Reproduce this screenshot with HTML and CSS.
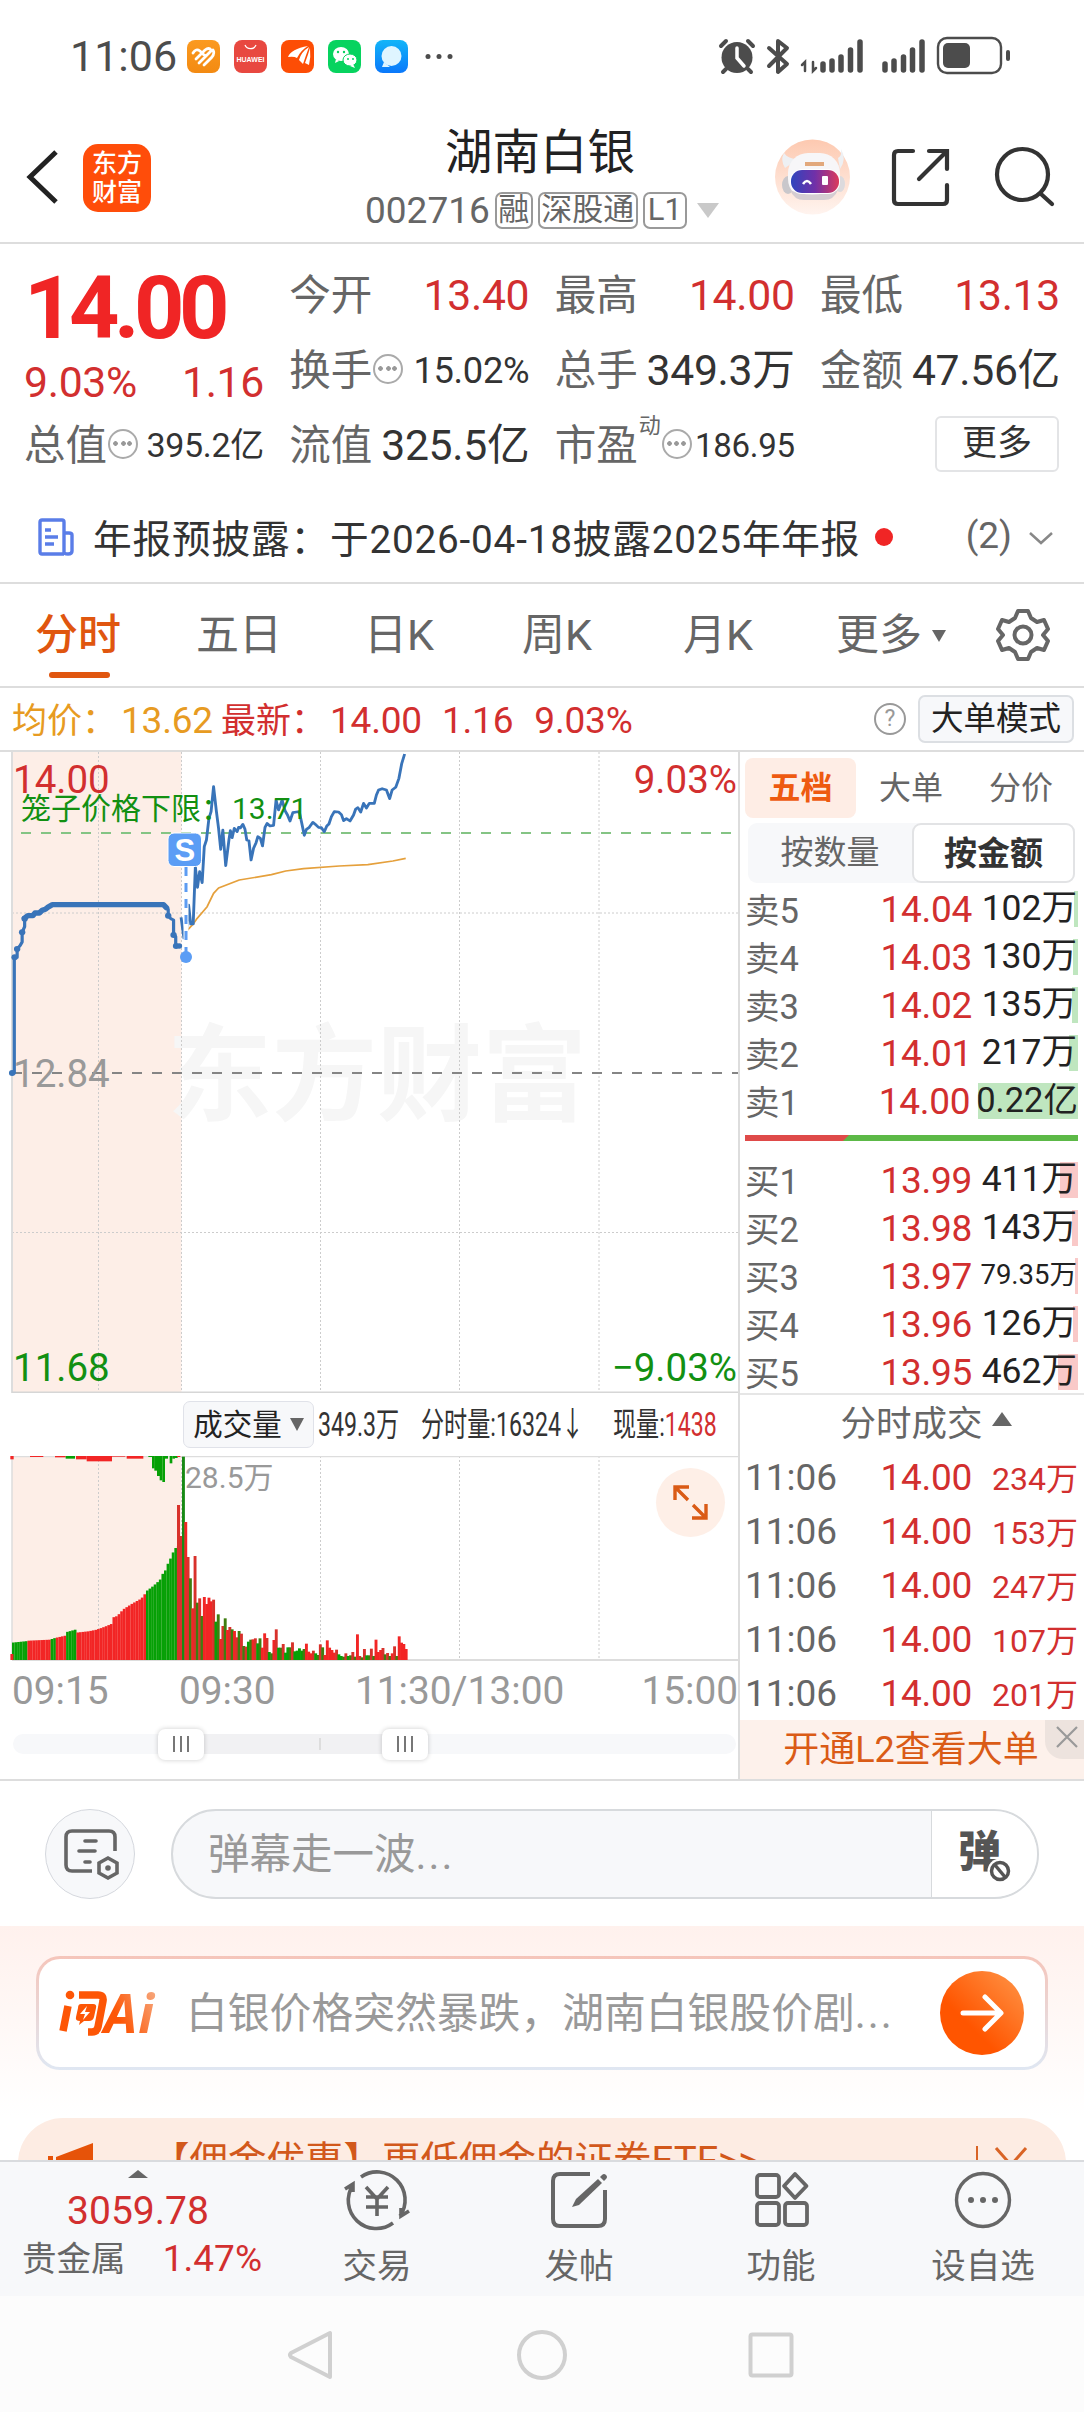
FILE: index.html
```html
<!DOCTYPE html>
<html lang="zh-CN">
<head>
<meta charset="utf-8">
<title>湖南白银 002716</title>
<link rel="stylesheet" href="styles.css">
</head>
<body>
<div class="phone">
  <div class="status">
    <span class="clock">11:06</span>
    <svg class="app-icons" width="270" height="34" viewBox="0 0 270 34">
      <defs>
        <linearGradient id="blueApp" x2="0" y2="1"><stop stop-color="#12b5f8"/><stop offset="1" stop-color="#0a78fb"/></linearGradient>
        <linearGradient id="orangeApp" x2="0" y2="1"><stop stop-color="#fb9a20"/><stop offset="1" stop-color="#f38a12"/></linearGradient>
      </defs>
      <rect width="33" height="33" rx="8" fill="url(#orangeApp)"/>
      <path d="M6 13q3-5 7-2l5 5M9 19l9-9q4-3 6 0M12 23l12-12M17 25l8-8q3-4 1-7" stroke="#fff" stroke-width="2.800" fill="none" stroke-linecap="round"/>
      <rect x="47" width="33" height="33" rx="8" fill="#e84840"/>
      <path d="M58 5a6 6 0 0 0 11 0" stroke="#fff" stroke-width="1.300" fill="none"/>
      <text x="63.500" y="22" class="hw">HUAWEI</text>
      <rect x="94" width="33" height="33" rx="8" fill="#fd4d05"/>
      <path d="M101 17q3-8 20-11q-7 4-11 12q-3-2-9-1zM112 20q2-8 10-13q-3 8-6 17zM118 23q3-8 5-15q1 9-1 17z" fill="#fff"/>
      <rect x="141" width="33" height="33" rx="8" fill="#07d35f"/>
      <ellipse cx="154" cy="14" rx="8" ry="7" fill="#fff"/><ellipse cx="163" cy="20" rx="7" ry="6" fill="#fff" stroke="#07d35f"/>
      <path d="M149 19l-1 4 4-2zM166 24l2 4-5-2z" fill="#fff"/>
      <g fill="#07d35f"><circle cx="151" cy="12" r="1.200"/><circle cx="157" cy="12" r="1.200"/><circle cx="161" cy="19" r="1"/><circle cx="166" cy="19" r="1"/></g>
      <rect x="188" width="33" height="33" rx="8" fill="url(#blueApp)"/>
      <circle cx="204.500" cy="16" r="10" fill="#dff5ff"/><path d="M197 22l-2 5h8z" fill="#dff5ff"/>
      <g fill="#4c4c4c"><circle cx="241" cy="16.500" r="2.500"/><circle cx="252" cy="16.500" r="2.500"/><circle cx="263" cy="16.500" r="2.500"/></g>
    </svg>
    <svg class="sys-icons" width="300" height="40" viewBox="716 35 300 40" fill="none" stroke="#4c4c4c" stroke-linecap="round">
      <circle cx="737" cy="57.500" r="15.500" fill="#4c4c4c" stroke="none"/>
      <path d="M721 46l5-5M748 41l5 5M726 69l-3 3M748 69l3 3" stroke-width="4"/>
      <path d="M737 48v10l7 8" stroke="#fff" stroke-width="3.500"/>
      <path d="M769 48l18 16-9 8V41l9 7-18 18" stroke-width="4" stroke-linejoin="round"/>
      <path d="M802 65l3-3v9M813 62v9l3-3" stroke-width="2.500"/>
      <path d="M823 64v6M832 61v9M841 57v13M850.500 50v20M860 42v28M885 64v6M894 61v9M903.500 57v13M912.500 50v20M922 42v28" stroke-width="5.500"/>
      <rect x="938" y="38" width="63" height="35" rx="9" stroke-width="2.400"/>
      <rect x="943" y="43" width="27" height="25" rx="5" fill="#4c4c4c" stroke="none"/>
      <path d="M1008 52v7" stroke-width="4"/>
    </svg>
  </div>

  <header class="header">
    <svg class="back" width="36" height="56" viewBox="0 0 36 56"><path d="M32 3L6 28l26 25" fill="none" stroke="#222" stroke-width="5"/></svg>
    <div class="brand"><span>东方</span><span>财富</span></div>
    <div class="title">
      <h1>湖南白银</h1>
      <div class="code"><span>002716</span><i>融</i><i>深股通</i><i>L1</i><b class="down"></b></div>
    </div>
    <svg class="head-icons" width="290" height="80" viewBox="770 137 290 80" fill="none">
      <defs>
        <linearGradient id="halo" x2="0" y2="1"><stop stop-color="#fdc9b0"/><stop offset="1" stop-color="#fff4ef"/></linearGradient>
        <linearGradient id="visor"><stop stop-color="#2f45bd"/><stop offset=".5" stop-color="#7130a8"/><stop offset="1" stop-color="#dc3a5c"/></linearGradient>
      </defs>
      <circle cx="812.500" cy="177" r="37.500" fill="url(#halo)"/>
      <path d="M785 168q-5-8-1-15q4 6 14 6zM838 158q4-2 3-9q6 10-1 20z" fill="#eef0f3"/>
      <ellipse cx="788" cy="185" rx="6" ry="9" fill="#c9c7cb"/><ellipse cx="840" cy="184" rx="5" ry="8" fill="#dcdadd"/>
      <rect x="788" y="153" width="52" height="46" rx="20" fill="#f7f6f8"/>
      <path d="M790 190q20 9 48 0q-4 10-14 10h-20q-10 0-14-10z" fill="#d5cdd2"/>
      <rect x="790" y="169" width="50" height="25" rx="12" fill="#fff"/>
      <rect x="791" y="170" width="48" height="23" rx="11" fill="url(#visor)"/>
      <path d="M803 184q4-6 8 0" stroke="#fff" stroke-width="2.500"/><rect x="822" y="176" width="6" height="9" rx="1" fill="#fff"/>
      <path d="M805 164h19" stroke="#e2a87c" stroke-width="4"/>
      <path d="M913 151h-15q-4 0-4 4v45q0 4 4 4h45q4 0 4-4v-15M929 151h18v18M946 152l-27 27" stroke="#333" stroke-width="4.200" stroke-linecap="round"/>
      <circle cx="1022.500" cy="174.500" r="25.500" stroke="#333" stroke-width="4.200"/><path d="M1041 194l11 10" stroke="#333" stroke-width="4.200" stroke-linecap="round"/>
    </svg>
  </header>

  <section class="quote">
    <div class="grid">
      <div class="price">14.00</div>
      <div class="cell"><span class="lb">今开</span><span class="v red">13.40</span></div>
      <div class="cell"><span class="lb">最高</span><span class="v red">14.00</span></div>
      <div class="cell"><span class="lb">最低</span><span class="v red">13.13</span></div>
      <div class="cell change"><span class="v red">9.03%</span><span class="v red">1.16</span></div>
      <div class="cell"><span class="lb">换手</span><em class="tip"></em><span class="v m">15.02%</span></div>
      <div class="cell"><span class="lb">总手</span><span class="v">349.3万</span></div>
      <div class="cell"><span class="lb">金额</span><span class="v">47.56亿</span></div>
      <div class="cell"><span class="lb">总值</span><em class="tip"></em><span class="v s">395.2亿</span></div>
      <div class="cell"><span class="lb">流值</span><span class="v">325.5亿</span></div>
      <div class="cell"><span class="lb">市盈</span><sup>动</sup><em class="tip"></em><span class="v xs">186.95</span></div>
      <div class="cell end"><button class="more">更多</button></div>
    </div>
    <div class="news">
      <svg width="38" height="40" viewBox="0 0 38 40" fill="none" stroke="#5a7de8" stroke-width="3.400" stroke-linejoin="round"><path d="M27 37H5q-2 0-2-2V5q0-2 2-2h20q2 0 2 2v30q0 2 4 2t4-3V18q0-2-3-2h-5M8 13h6M8 20h13M8 27h9"/></svg>
      <span class="headline">年报预披露：于2026-04-18披露2025年年报</span>
      <b class="dot"></b>
      <span class="count">(2)</span>
      <svg class="chev" width="26" height="14" viewBox="0 0 26 14"><path d="M2 2l11 10L24 2" fill="none" stroke="#888" stroke-width="2.500"/></svg>
    </div>
  </section>

  <nav class="periods">
    <span class="on">分时</span><span>五日</span><span>日K</span><span>周K</span><span>月K</span><span class="dd">更多<b class="down"></b></span>
    <svg width="54" height="56" viewBox="-27 -28 54 56" fill="none" stroke="#666" stroke-width="4" stroke-linejoin="round"><path d="M-5-24H5L8-17L14-13L21-15L25-6L20 0L25 6L21 15L14 13L8 17L5 24H-5L-8 17L-14 13L-21 15L-25 6L-20 0L-25-6L-21-15L-14-13L-8-17Z"/><circle r="8.500"/></svg>
  </nav>

  <div class="summary">
    <span class="avg">均价：<b>13.62</b></span><span class="last">最新：<b>14.00</b><b class="d">1.16</b><b class="p">9.03%</b></span>
    <span class="help">?</span><button>大单模式</button>
  </div>

  <main class="market">
    <section class="charts">
      <svg class="price-chart" width="738" height="641" viewBox="0 752 738 641">
        <rect x="12" y="752" width="169.500" height="641" fill="#fdeee7"/>
        <text x="167" y="1112" class="watermark">东方财富</text>
        <path d="M98.500 752v641M181.500 752v641M320.500 752v641M459.500 752v641M599 752v641M12 913h726M12 1232.500h726" class="gridline"/>
        <path d="M12 752v641" stroke="#ddd" stroke-width="2"/>
        <path d="M12 1392.500h726" stroke="#d6d6d6" stroke-width="2"/>
        <path d="M21 833H738" stroke="#84c484" stroke-width="2" stroke-dasharray="10 10"/>
        <path d="M12 1073H738" stroke="#858585" stroke-width="2" stroke-dasharray="10 10"/>
        <g transform="translate(0 740) scale(.35714 .33333)" fill="none" stroke-linejoin="round">
          <path d="M521 575L541 552 550 538 580 500 598 460 612 444 670 420 760 404 800 393 850 386 950 378 1030 374 1100 363 1136 355" stroke="#e5a03c" stroke-width="5"/>
          <path d="M34 999H40V652H48V627L56 617 62 606V577L69 560V536L78 527H92L98 519H110L118 511 127 508 134 502 142 499 146 494M458 494L464 502 471 508V527L478 536 486 540V585L492 590V618H503" stroke="#3974b9" stroke-width="9"/>
          <path d="M69 534L78 527H92L98 519H110L118 511 127 508 134 502 146 494H458L466 503" stroke="#3974b9" stroke-width="16" stroke-linecap="round"/>
          <path d="M507 532L515 594 521 590 528 495 534 552 541 552 547 380 553 442 559 395 566 428 572 320 578 300 585 235 591 215 598 140 606 215 612 265 618 328 624 270 632 377 641 300 645 272 650 293 656 265 664 275 668 262 673 264 680 253 686 268 691 300 697 302 703 360 710 325 717 308 722 290 729 295 735 318 742 262 748 250 756 258 766 256 773 180 780 210 790 180 798 212 805 225 812 243 820 218 830 216 838 215 845 250 852 286 858 268 866 262 876 247 886 256 892 262 900 263 908 275 915 258 921 252 928 230 936 215 948 216 956 224 962 242 970 236 980 243 990 225 996 207 1002 203 1010 216 1018 190 1026 204 1034 190 1048 190 1054 165 1060 150 1070 146 1082 150 1091 176 1098 150 1108 142 1117 115 1125 70 1133 42" stroke="#3974b9" stroke-width="8"/>
          <g fill="#3974b9"><circle cx="34" cy="999" r="9"/><circle cx="41" cy="652" r="9"/><circle cx="48" cy="627" r="9"/><circle cx="62" cy="577" r="9"/><circle cx="69" cy="536" r="9"/><circle cx="471" cy="527" r="9"/><circle cx="486" cy="585" r="9"/><circle cx="493" cy="618" r="9"/><circle cx="502" cy="618" r="8"/></g>
        </g>
        <path d="M186 866V950" stroke="#fff" stroke-width="5"/><path d="M186 867V955" stroke="#5d9cf2" stroke-width="3" stroke-dasharray="9 7"/>
        <circle cx="186" cy="957" r="6" fill="#5b9df5"/>
        <rect x="168" y="833" width="33.500" height="33.500" rx="6" fill="#5b9df5" stroke="#fff"/>
        <text x="184.800" y="861" class="sell">S</text>
        <text x="13" y="793" class="axis" fill="#d22f2f">14.00</text>
        <text x="737" y="793" class="axis r" fill="#d22f2f">9.03%</text>
        <text x="21" y="819" class="cage">笼子价格下限：<tspan x="232">13.71</tspan></text>
        <text x="13" y="1087" class="axis" fill="#999">12.84</text>
        <text x="13" y="1381" class="axis" fill="#129012">11.68</text>
        <text x="737" y="1381" class="axis r" fill="#129012">−9.03%</text>
      </svg>
      <div class="indicator">
        <button>成交量<b class="down"></b></button>
        <span class="nar total"><span>349.3万</span></span>
        <span class="nar minute"><span>分时量:16324↓</span></span>
        <span class="nar now"><span>现量:<i>1438</i></span></span>
      </div>
      <svg class="volume" width="738" height="265" viewBox="0 1456 738 265">
        <rect x="12" y="1456" width="169.500" height="203" fill="#fdeee7"/>
        <path d="M98.500 1456v203M181.500 1456v203M320.500 1456v203M459.500 1456v203M599 1456v203" class="gridline"/>
        <path d="M12 1456.500H738M12 1456v203" stroke="#ddd" stroke-width="1.500"/><path d="M12 1660H738" stroke="#ddd" stroke-width="2"/>
        <g id="bars"></g>
        <text x="185" y="1488" class="peak">28.5万</text>
        <circle cx="690.500" cy="1502.500" r="34.500" fill="#feefe7"/>
        <path d="M675 1500v-13h14M676 1488l12 12M706 1504v14h-14M705 1517l-12-12" stroke="#da5b16" stroke-width="3.400" fill="none"/>
        <g class="times"><text x="12" y="1704">09:15</text><text x="179" y="1704">09:30</text><text x="355" y="1704">11:30/13:00</text><text x="738" y="1704" class="r">15:00</text></g>
      </svg>
      <div class="range"><div class="span"><i></i><b></b><i></i></div></div>
    </section>

    <aside class="book">
      <div class="modes"><b>五档</b><span>大单</span><span>分价</span></div>
      <div class="seg"><span>按数量</span><b>按金额</b></div>
      <ul class="levels sell-side">
        <li><span>卖5</span><b>14.04</b><em style="--w:4px">102万</em></li>
        <li><span>卖4</span><b>14.03</b><em style="--w:5px">130万</em></li>
        <li><span>卖3</span><b>14.02</b><em style="--w:6px">135万</em></li>
        <li><span>卖2</span><b>14.01</b><em style="--w:9px">217万</em></li>
        <li><span>卖1</span><b>14.00</b><em class="md" style="--w:100px">0.22亿</em></li>
      </ul>
      <div class="ratio"><i></i></div>
      <ul class="levels buy-side">
        <li><span>买1</span><b>13.99</b><em style="--w:18px">411万</em></li>
        <li><span>买2</span><b>13.98</b><em style="--w:6px">143万</em></li>
        <li><span>买3</span><b>13.97</b><em class="sm" style="--w:3px">79.35万</em></li>
        <li><span>买4</span><b>13.96</b><em style="--w:5px">126万</em></li>
        <li><span>买5</span><b>13.95</b><em style="--w:20px">462万</em></li>
      </ul>
      <div class="deals-title">分时成交<b class="up"></b></div>
      <ul class="deals">
        <li><span>11:06</span><b>14.00</b><em>234万</em></li>
        <li><span>11:06</span><b>14.00</b><em>153万</em></li>
        <li><span>11:06</span><b>14.00</b><em>247万</em></li>
        <li><span>11:06</span><b>14.00</b><em>107万</em></li>
        <li><span>11:06</span><b>14.00</b><em>201万</em></li>
      </ul>
      <div class="l2">开通L2查看大单<span class="close"><svg width="22" height="22" viewBox="0 0 22 22"><path d="M1 1l20 20M21 1L1 21" stroke="#999" stroke-width="2.200"/></svg></span></div>
    </aside>
  </main>

  <div class="danmu">
    <div class="round"><svg width="56" height="52" viewBox="0 0 56 52" fill="none" stroke="#666" stroke-width="3.600" stroke-linecap="round"><path d="M28 42H8q-6 0-6-6V8q0-6 6-6h37q6 0 6 6v14" stroke-linecap="butt"/><path d="M21 12h11M15 22h16M21 33h5"/><path d="M44 29l9 5v10l-9 5-9-5V34z"/><circle cx="44" cy="39" r="2.800" fill="#666" stroke="none"/></svg></div>
    <div class="field"><span>弹幕走一波<i class="dots">...</i></span><div class="toggle">弹<svg width="26" height="26" viewBox="-13 -13 26 26"><circle r="12.500" fill="#fff"/><circle r="8.500" fill="none" stroke="#555" stroke-width="3.500"/><path d="M-5-6L5 6" stroke="#555" stroke-width="3.500"/></svg></div></div>
  </div>

  <div class="feed">
    <div class="ask">
      <svg width="104" height="54" viewBox="0 0 104 54">
        <defs><linearGradient id="askInk" gradientUnits="userSpaceOnUse" x1="0" y1="50" x2="100" y2="0"><stop offset=".55" stop-color="#fd5606"/><stop offset="1" stop-color="#f6b089"/></linearGradient></defs>
        <g fill="none" stroke="url(#askInk)" stroke-width="7.500" stroke-linecap="round" stroke-linejoin="round"><path d="M10 20L5 45M21 9h19q6 0 5 6l-5 26q-1 5-6 5h-4" stroke-linecap="butt"/></g>
        <circle cx="12" cy="9" r="4.300" fill="url(#askInk)"/>
        <path d="M21 18h14q4 0 3 4l-2 9q-1 4-5 4h-5l-5 4 1-4q-5 0-4-4l2-9q0-4 3-4z" fill="#fd5606"/>
        <path d="M29 20l-7 8h5l-2 6 7-8h-5z" fill="#fff"/>
        <text x="46" y="47" class="ai" fill="url(#askInk)">Ai</text>
      </svg>
      <span class="q">白银价格突然暴跌，湖南白银股价剧<i class="dots">...</i></span>
      <span class="go"><svg width="44" height="40" viewBox="0 0 44 40" fill="none" stroke="#fff" stroke-width="5" stroke-linecap="round" stroke-linejoin="round"><path d="M3 20h37M25 4l16 16-16 16"/></svg></span>
    </div>
    <div class="promo">
      <svg class="horn" width="46" height="40" viewBox="0 0 46 40" fill="#e65309"><path d="M0 13h5v20H0zM8 14L45 0v38L8 28z"/></svg>
      <span class="ptext">【佣金优惠】更低佣金的证券ETF&gt;&gt;</span>
      <svg class="px" width="52" height="34" viewBox="0 0 52 34" fill="none" stroke="#d96426" stroke-width="2"><path d="M1 0v34"/><path d="M20 2l30 34M50 2L20 36" stroke-width="3"/></svg>
    </div>
  </div>

  <nav class="tabbar">
    <div class="index"><b class="up"></b><span class="num">3059.78</span><div><span>贵金属</span><span class="pc">1.47%</span></div></div>
    <div class="tab"><svg width="68" height="62" viewBox="-34 -31 68 62" fill="none" stroke="#666" stroke-width="3.600"><path d="M-16-23A28 28 0 0 1 23 16M16 23A28 28 0 0 1-24-15M-32-11l8-5v8M32 11l-8 5V8M-11-13L0-1 11-13M0-1v17M-11-3h22M-11 7h22"/></svg>交易</div>
    <div class="tab"><svg width="68" height="62" viewBox="-34 -31 68 62" fill="none" stroke="#666" stroke-width="4"><path d="M11-26h-30q-7 0-7 7v38q0 7 7 7h38q7 0 7-7V-10"/><path d="M-7 7l4-8L19-21l4 4L0 5z" fill="#666" stroke="none"/><path d="M21-23l2-2q2-2 4 0t0 4l-2 2z" fill="#666" stroke="none"/></svg>发帖</div>
    <div class="tab"><svg width="68" height="62" viewBox="-34 -31 68 62" fill="none" stroke="#666" stroke-width="3.800" stroke-linejoin="round"><rect x="-24" y="-25" width="22" height="22" rx="3"/><rect x="-24" y="3" width="22" height="22" rx="3"/><rect x="4" y="3" width="22" height="22" rx="3"/><path d="M14-26l11.500 12L14-2 3-14z"/></svg>功能</div>
    <div class="tab"><svg width="68" height="62" viewBox="-34 -31 68 62" fill="#666"><circle r="26.500" fill="none" stroke="#666" stroke-width="3.400"/><circle cx="-12" r="3"/><circle r="3"/><circle cx="12" r="3"/></svg>设自选</div>
  </nav>
  <div class="sysnav"><svg width="520" height="60" viewBox="282 2324 520 60" fill="none" stroke="#d0d0d0" stroke-width="4" stroke-linejoin="round"><path d="M330 2332v44L291 2356q-2-2 0-4z"/><circle cx="542" cy="2354" r="23"/><rect x="750.500" y="2333.500" width="41" height="41" rx="2"/></svg></div>
</div>
<script src="volume.js"></script>
</body>
</html>
```
FILE: volume.js
```js
// Volume bars. Heights are in thirds of a pixel, measured from the baseline.
const NS = 'http://www.w3.org/2000/svg';
const root = document.getElementById('bars');
const RED = '#f22525', GREEN = '#06a006';
const MIX_RED = '#d8312b', MIX_GREEN = '#3f7d10';

function bar(x, y, w, h, fill) {
  const r = document.createElementNS(NS, 'rect');
  r.setAttribute('x', x); r.setAttribute('y', y);
  r.setAttribute('width', w); r.setAttribute('height', h);
  r.setAttribute('fill', fill);
  root.appendChild(r);
}

// Call auction, 09:15 to 09:25: [x, height] envelope
const env = [[36,52],[84,57],[86,58],[150,61],[165,66],[196,73],[197,83],[226,91],[228,82],[265,86],[290,91],[315,100],[334,108],[337,127],[352,132],[370,152],[395,168],[420,182],[430,190],[440,207],[460,222],[480,240],[488,258],[497,270],[505,292],[513,307],[521,327],[531,342]];
const greens = [[36,84],[150,165],[197,228],[440,531]];
for (let x = 36; x < 531; x += 7.73) {
  let i = 1;
  while (i < env.length - 1 && env[i][0] < x + 4) i++;
  const [x0, h0] = env[i - 1], [x1, h1] = env[i];
  const h = h0 + (h1 - h0) * Math.min(1, (x + 4 - x0) / (x1 - x0));
  const g = greens.some(([a, b]) => x + 4 >= a && x + 4 < b);
  bar(x / 3, 1660 - h / 3, 2.65, h / 3, g ? GREEN : RED);
}
bar(10.4, 1654, 3, 6, RED);
bar(177, 1505, 3, 155, MIX_RED);
bar(180, 1536, 2.2, 124, MIX_RED);

// Unmatched auction volume, hanging from the top edge
[[31,10,10,1],[90,40,3,1],[165,32,4,1],[197,28,8,0],[228,32,10,1],[260,76,16,1],[336,40,2,1],[380,50,8,1],[445,11,3,0],[456,8,37,0],[463,9,44,0],[471,9,60,0],[479,8,73,0],[487,8,78,0],[495,9,8,0],[509,8,22,0],[517,8,8,0],[525,8,6,0],[531,10,3,1]]
  .forEach(([x, w, h, r]) => bar(x / 3, 1456, w / 3, h / 3, r ? RED : GREEN));

// One bar a minute from 09:30; negative values are falling minutes
const minutes = [-610,414,309,-245,155,312,-172,185,-132,189,168,187,176,181,-115,-137,63,102,-125,90,99,-92,87,68,-87,79,-42,40,-55,-61,62,65,-50,-65,37,80,66,-24,-20,60,92,-37,-37,48,-22,-38,-38,53,-26,-28,-35,-28,-33,49,25,20,28,-20,-15,47,-38,15,59,37,30,22,31,-17,-12,-10,20,-12,-14,24,-10,77,12,-8,33,-14,-14,34,-12,61,24,30,36,-17,21,-12,20,41,-12,71,52,48,33];
minutes.forEach((v, i) => {
  const h = Math.abs(v) / 3;
  const near = Math.sign(minutes[i + 1] || v) === Math.sign(v);
  const fill = v < 0 ? (near ? GREEN : MIX_GREEN) : (near ? RED : MIX_RED);
  bar(182 + i * 2.32, 1660 - h, 2.9, h, i ? fill : '#188a14');
});
```
FILE: styles.css
```css
* { box-sizing: border-box; }
body { margin: 0; background: #fff; color: #333; font-family: Roboto, "Noto Sans CJK SC", sans-serif; }
button { font: inherit; color: inherit; padding: 0; }
ul { list-style: none; margin: 0; padding: 0; }
i, em { font-style: normal; }
h1 { margin: 0; font-weight: 400; color: #222; }
svg { flex: none; display: block; }
.phone { width: 1084px; height: 2412px; overflow: hidden; display: flex; flex-direction: column; background: #fff; }
.phone > * { flex: none; }
.down, .up { display: inline-block; border: solid transparent; border-width: 0 8px; }
.down { border-top: 13px solid #666; }
.up { border-bottom: 14px solid #666; }
.red { color: #d22f2f; }
.dots { letter-spacing: 2px; }

.status { height: 112px; display: flex; align-items: center; padding-left: 70px; color: #4c4c4c; }
.clock { width: 117px; font-size: 43px; line-height: 112px; }
.app-icons { margin-top: 1px; }
.hw { font: 700 7px "Liberation Sans", sans-serif; fill: #fff; text-anchor: middle; }
.sys-icons { margin: -2px 0 0 259px; }

.header { height: 132px; border-bottom: 2px solid #ddd; display: flex; align-items: flex-start; }
.back { margin: 37px 0 0 24px; }
.brand { margin: 32px 0 0 23px; width: 68px; height: 68px; border-radius: 15px; background: #ff4d0a; color: #fff; display: flex; flex-direction: column; align-items: center; justify-content: center; font-weight: 500; font-size: 25px; line-height: 29px; }
.title { width: 350px; margin-left: 214px; }
.title h1 { font-size: 47.5px; line-height: 60px; margin: 11px 0 0 80px; }
.code { display: flex; align-items: center; height: 37px; margin-top: 9px; color: #666; font-size: 37px; gap: 5px; white-space: nowrap; }
.code i { font-size: 31px; height: 37px; line-height: 31px; border: 2px solid #999; border-radius: 7px; padding: 0 1.5px; }
.code i:last-of-type { padding: 0 3px; }
.code .down { border-width: 15px 11px 0; border-top-color: #c9c9c9; margin-left: 5px; }
.head-icons { margin: 25px 0 0 55px; }

.quote { height: 340px; border-bottom: 2px solid #ddd; padding-top: 14px; }
.grid { display: grid; grid-template-columns: repeat(4, 239px); grid-auto-rows: 75px; justify-content: space-between; padding: 0 25px 0 24px; }
.price { color: #f02525; font-weight: 700; font-size: 88px; letter-spacing: -5.5px; line-height: 100px; }
.cell { display: flex; align-items: center; color: #333; white-space: nowrap; line-height: 75px; }
.lb { font-size: 41.5px; color: #666; }
.v { margin-left: auto; font-size: 42.7px; letter-spacing: -.3px; margin-right: -1px; }
.v.m { font-size: 36.3px; } .v.s { font-size: 34px; } .v.xs { font-size: 33px; }
.change { padding-top: 24px; }
.change .v:first-child { margin-left: 0; }
.tip { width: 30px; height: 30px; border: 2.5px solid #aaa; border-radius: 50%; margin: -4px 0 0 1px; background: radial-gradient(circle, #999 2px, transparent 2.6px) center / 7px 7px no-repeat, radial-gradient(circle, #999 2px, transparent 2.6px) 2px center / 7px 7px no-repeat, radial-gradient(circle, #999 2px, transparent 2.6px) 16px center / 7px 7px no-repeat; }
sup { font-size: 22px; line-height: 22px; color: #666; align-self: flex-start; margin: 7px 0 0 1px; }
.end { justify-content: flex-end; }
.more { width: 124px; height: 56px; border: 2px solid #e3e4e6; border-radius: 6px; background: #fff; font-size: 35px; line-height: 48px; margin-top: -4px; }
.news { display: flex; align-items: center; height: 110px; padding-left: 37px; margin-top: -1px; }
.headline { margin: -3px 0 0 18px; font-size: 38.7px; letter-spacing: .8px; white-space: nowrap; }
.dot { width: 18px; height: 18px; border-radius: 50%; background: #f02525; margin-left: 15px; }
.count { color: #666; font-size: 37px; margin: -3px 0 0 auto; }
.chev { margin: 1px 30px 0 16px; }

.periods { height: 104px; border-bottom: 2px solid #ddd; display: flex; align-items: center; color: #666; font-size: 43px; line-height: 102px; padding-left: 35px; }
.periods span { position: relative; width: 87px; margin-right: 74px; white-space: nowrap; }
.periods span:nth-child(2) { margin-right: 81px; }
.periods span:nth-child(3) { margin-right: 71px; }
.periods .dd { width: 112px; margin: 0 48px 0 -8px; }
.dd .down { margin-left: 10px; border-width: 12px 7px 0; vertical-align: 8px; }
.periods .on { color: #e0560f; font-weight: 500; }
.periods .on::after { content: ""; position: absolute; left: 14px; bottom: 8px; width: 61px; height: 6px; border-radius: 3px; background: #e0560f; }

.summary { height: 64px; border-bottom: 2px solid #ddd; display: flex; align-items: center; padding: 0 10px 0 12px; font-size: 35px; white-space: nowrap; }
.summary b { font-weight: 400; font-size: 37px; letter-spacing: -.2px; margin-left: 4px; }
.avg { color: #e79b22; width: 209px; margin-top: -4px; }
.last { color: #d22f2f; margin-top: -4px; }
.summary .d { margin-left: 20px; }
.summary .p { margin-left: 21px; }
.help { margin-left: auto; width: 32px; height: 32px; border: 2.5px solid #999; color: #999; border-radius: 50%; font-size: 23px; line-height: 28px; text-align: center; }
.summary button { width: 156px; height: 48px; margin-left: 12px; border: 2px solid #dcdfe3; border-radius: 7px; background: #f7f8fa; color: #222; font-size: 32.5px; line-height: 43px; }

.market { height: 1029px; display: flex; border-bottom: 2px solid #ddd; }
.charts { width: 738px; }
.gridline { stroke: #ccc; stroke-width: 1; stroke-dasharray: 2 2; fill: none; }
.axis { font-size: 38.5px; }
.r { text-anchor: end; }
.cage { font-size: 30px; fill: #129012; }
.watermark { font-size: 105px; font-weight: 700; fill: #f6f6f6; }
.sell { font: 700 31px "Liberation Sans", sans-serif; fill: #fff; text-anchor: middle; }
.indicator { height: 63px; display: flex; align-items: center; padding-left: 183px; white-space: nowrap; color: #333; }
.indicator button { width: 131px; height: 47px; background: #f7f8fa; border: 1.5px solid #e0e2e9; border-radius: 7px; color: #222; font-size: 29.5px; line-height: 42px; }
.indicator .down { border-width: 13px 7px 0; margin-left: 8px; vertical-align: 4px; }
.nar { font-size: 33.5px; line-height: 60px; margin-left: 4px; }
.nar span { display: inline-block; transform: scaleX(.69); transform-origin: 0 50%; }
.total { width: 103px; } .minute { width: 188px; margin-left: 0; } .now { width: 100px; }
.now i { color: #d22f2f; }
.peak { font-size: 30px; fill: #999; }
.times { font-size: 38.8px; fill: #999; }
.range { height: 20px; margin: 13px 2px 0 13px; border-radius: 10px; background: #f7f8fa; padding-left: 145px; }
.span { width: 270px; height: 20px; background: #f1f1f3; display: flex; align-items: center; justify-content: space-between; }
.span i { width: 46px; height: 31px; border-radius: 7px; box-shadow: 0 0 5px #0003; background: linear-gradient(90deg, #777 2px, transparent 2px 7px, #777 7px 9px, transparent 9px 14px, #777 14px) center / 16px 16px no-repeat, #fff; }
.span b { width: 1.5px; height: 12px; background: #ddd; margin: 0 auto 0 115px; }

.book { width: 346px; border-left: 2px solid #ddd; display: flex; flex-direction: column; }
.modes { display: flex; height: 61px; margin: 6px 0 0 5px; font-size: 32px; line-height: 60px; color: #666; }
.modes b { width: 111px; background: #feede5; border-radius: 8px; color: #ee5a10; text-align: center; }
.modes span { width: 110px; text-align: center; }
.modes b, .seg b { font-weight: 700; }
.seg { display: flex; margin: 5px 9px 0 8px; height: 60px; border-radius: 9px; background: #f7f8fa; font-size: 33px; line-height: 60px; color: #666; }
.seg span { width: 164px; text-align: center; }
.seg b { width: 163px; text-align: center; background: #fff; color: #333; border: 2px solid #e2e3e5; border-radius: 9px; line-height: 57px; }
.levels li, .deals li { display: flex; align-items: center; height: 48px; font-size: 37px; padding: 0 6px 0 5px; }
.levels span, .deals span { width: 121px; color: #666; font-size: 37px; }
.levels span { font-size: 34.5px; padding-bottom: 3px; }
.levels b, .deals b { width: 106px; text-align: right; font-weight: 400; color: #d22f2f; letter-spacing: -.3px; }
.levels em { flex: 1; height: 36px; line-height: 34px; text-align: right; color: #222; font-size: 35.5px; white-space: nowrap; direction: rtl; background: linear-gradient(#bfe6bf, #bfe6bf) right / var(--w) 100% no-repeat; padding-right: 1px; }
.levels .md { font-size: 34.5px; padding-right: 0; }
.levels .sm { font-size: 27.5px; }
.buy-side em { background-image: linear-gradient(#f9c9c8, #f9c9c8); }
.levels b { margin-right: 6px; }
.ratio { height: 6px; margin: 10px 6px 0 5px; background: #5cb947; }
.ratio i { display: block; width: 104px; height: 6px; background: #df4a49; clip-path: polygon(0 0, 100% 0, 98px 100%, 0 100%); }
.buy-side { margin-top: 15px; }
.sell-side { margin-top: 2px; }
.deals-title { margin-top: -3px; border-top: 2px solid #e6e6e6; height: 60px; display: flex; align-items: center; justify-content: center; gap: 9px; font-size: 35.5px; color: #666; padding: 0 0 4px 28px; }
.deals-title .up { border-width: 0 10.5px 14px; margin-top: -3px; }
.deals li { height: 54px; }
.deals em { flex: 1; text-align: right; color: #d22f2f; font-size: 32px; padding-bottom: 2px; }
.l2 { position: relative; margin-top: auto; height: 59px; background: #fdf1eb; color: #da5b16; font-size: 36px; line-height: 60px; text-align: center; padding-right: 2px; }
.close { position: absolute; right: 0; top: 0; width: 39px; height: 39px; background: #ede3de; border-bottom-left-radius: 18px; padding: 6px 0 0 11px; }

.danmu { height: 145px; display: flex; padding: 28px 45px 0; gap: 36px; }
.round { width: 90px; height: 90px; border: 1.5px solid #d5d8de; border-radius: 50%; background: #f7f8fa; padding: 19px 0 0 18px; }
.field { width: 868px; height: 90px; border: 2px solid #d7dadd; border-radius: 45px; background: #f7f8fa; display: flex; overflow: hidden; color: #999; font-size: 41.5px; line-height: 88px; }
.field > span { flex: 1; padding-left: 35px; }
.toggle { position: relative; width: 106px; border-left: 1.5px solid #d7dadd; background: #fff; color: #555; font-weight: 900; font-size: 43px; line-height: 82px; padding-left: 26px; }
.toggle svg { position: absolute; left: 55px; top: 47px; }

.feed { height: 234px; overflow: hidden; background: linear-gradient(#fff1ed, #fff 190px); padding: 30px 18px 0; }
.ask { margin: 0 18px; height: 114px; border: 3px solid transparent; border-radius: 24px; background: linear-gradient(#fff, #fff) padding-box, linear-gradient(#f5c5ba, #dfe7f2) border-box; display: flex; align-items: center; padding: 0 21px 0 19px; }
.ai { font: italic 700 53px "Open Sans", sans-serif; letter-spacing: 1px; }
.q { margin-left: 24px; color: #999; font-size: 41.8px; white-space: nowrap; flex: 1; padding-bottom: 6px; }
.go { width: 84px; height: 84px; border-radius: 50%; background: linear-gradient(45deg, #ff5500 35%, #ff974a); display: grid; place-items: center; }
.promo { margin-top: 48px; height: 90px; border-radius: 58px; background: #fdece3; display: flex; align-items: flex-start; padding: 25px 38px 0 30px; color: #d2581b; }
.ptext { font-size: 38.5px; line-height: 36px; margin-left: 57px; white-space: nowrap; }
.px { margin: 3px 0 0 auto; }

.tabbar { height: 136px; background: #f7f8fa; border-top: 2px solid #d9dbde; display: flex; color: #666; font-size: 34.5px; line-height: 44px; }
.index { width: 276px; display: flex; flex-direction: column; align-items: center; }
.index .up { border-width: 0 10.5px 8px; margin-top: 8px; }
.index .num { color: #d22f2f; font-size: 39px; line-height: 50px; margin-top: 8px; }
.index div { align-self: flex-start; width: 240px; margin: 1px 0 0 22px; display: flex; justify-content: space-between; }
.index .pc { color: #d22f2f; font-size: 37px; }
.tab { width: 202px; display: flex; flex-direction: column; align-items: center; padding-top: 7px; }
.tab svg { margin-bottom: 13px; }
.sysnav { height: 117px; background: #fcfcfc; padding: 29px 0 0 282px; }
```
